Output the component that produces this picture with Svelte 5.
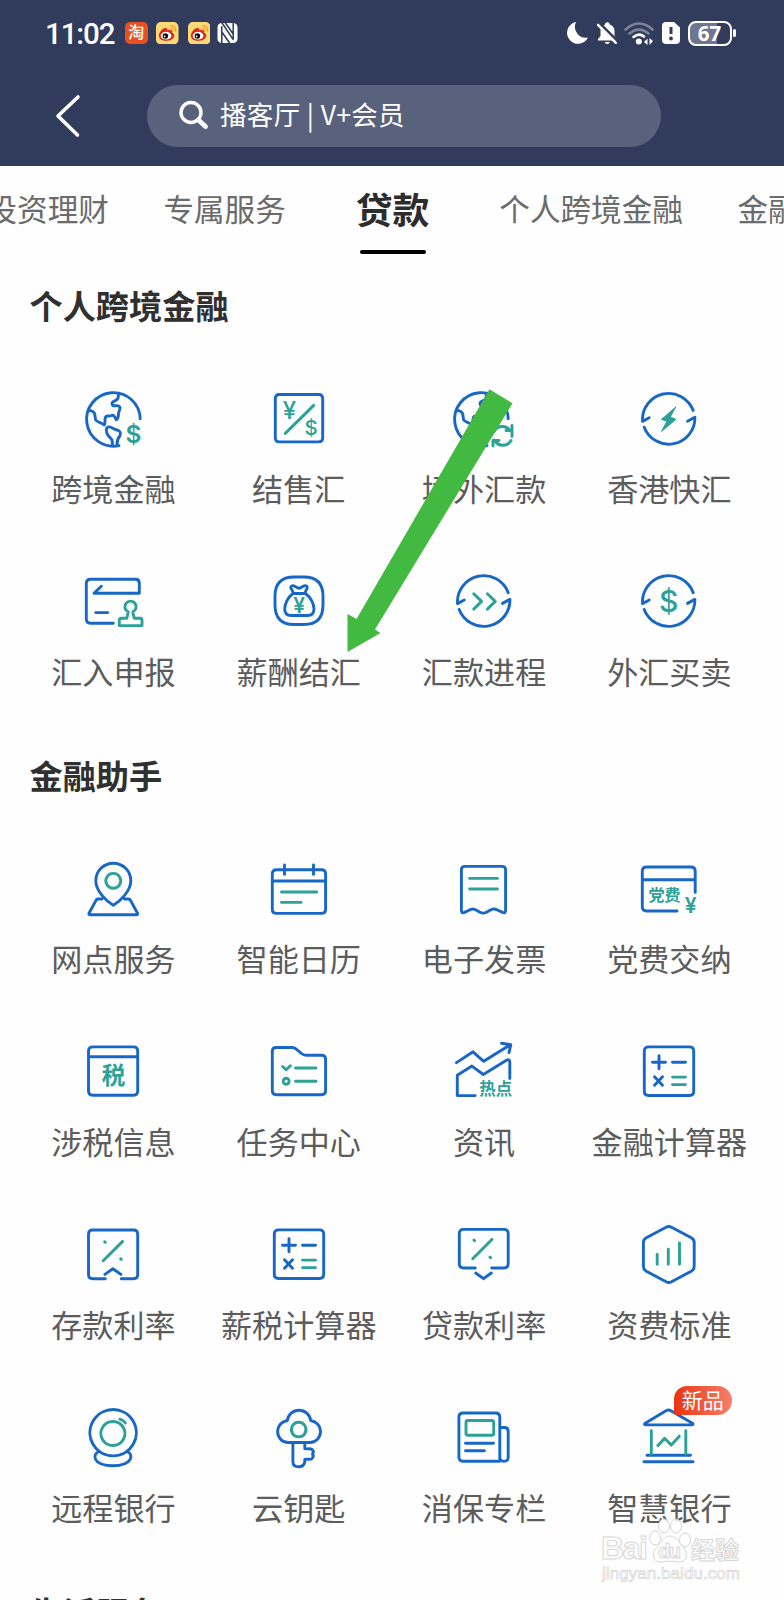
<script lang="ts">
  type Glyph = { t: string; x: number; y: number; size: number; weight?: number };
  type Icon = { blue?: string; green?: string; fill?: string; glyphs?: Glyph[]; dy?: number };
  type Item = { icon: string; label: string; badge?: string };

  const cycle =
    'M54.2 21.5A26.2 26.2 0 0 0 3.5 32.4L10.2 28.8M5.2 38.2A26.2 26.2 0 0 0 55.9 28.2L48.5 32.2';
  const land =
    'M57.2 29.8A26.8 26.8 0 1 0 36 56.6M35 4.2C36 8 35 11 31.5 12C27.5 13.5 29 17 32 16.8C37 16 38 18.5 36 22.5C34.5 25 37 28 33.3 30.8C32 28 31 25.5 28.5 26.5C25.5 28.2 23.5 25.5 22.3 28.5C21.5 31 22.7 34 21.3 36C19 33.5 14.5 33.5 12.7 31C11.5 28 13.5 22 6.5 21.5';
  // same globe, moved left to leave room for the refresh arrows
  const landLeft =
    'M54.2 29.8A26.8 26.8 0 1 0 33 56.6M32 4.2C33 8 32 11 28.5 12C24.5 13.5 26 17 29 16.8C34 16 35 18.5 33 22.5C31.5 25 34 28 30.3 30.8C29 28 28 25.5 25.5 26.5C22.5 28.2 20.5 25.5 19.3 28.5C18.5 31 19.7 34 18.3 36C16 33.5 11.5 33.5 9.7 31C8.5 28 10.5 22 3.5 21.5';
  const calc =
    'M9.5 4.9H50.5Q54.7 4.9 54.7 9.1V49.3Q54.7 53.5 50.5 53.5H9.5Q5.3 53.5 5.3 49.3V9.1Q5.3 4.9 9.5 4.9ZM13.5 20.2H26.5M20 13.7V26.7M33.5 20.2H46.5M15.5 34.8L23.5 43.2M23.5 34.8L15.5 43.2';

  const icons: Record<string, Icon> = {
    globe: {
      blue: land + 'M29.3 56.5C30 50.5 28.5 50 25.5 47C23 44 22.5 39 25 38C28 37 30 40 32.5 40.5C37 41.5 38.5 43.5 37 46.5C35 49 34 51 34 55.5',
      glyphs: [{ t: '$', x: 50.5, y: 54.2, size: 24.5, weight: 600 }],
    },
    exchange: {
      blue: 'M10.5 6.3H49.5Q53.7 6.3 53.7 10.5V49.5Q53.7 53.7 49.5 53.7H10.5Q6.3 53.7 6.3 49.5V10.5Q6.3 6.3 10.5 6.3Z',
      green: 'M44.7 17.2L16.3 45.2',
      glyphs: [
        { t: '¥', x: 20.4, y: 31.2, size: 24, weight: 500 },
        { t: '$', x: 42, y: 47, size: 20.5, weight: 500 },
      ],
      dy: -0.8,
    },
    remit: {
      blue: landLeft,
      green: 'M58 47.5V36.5M58 41.5H52M55.5 41A9.3 9.3 0 0 0 40 42.5M57 51.5A9.3 9.3 0 0 1 40.5 51M39 57V51.5H45',
    },
    bolt: { blue: cycle, fill: 'M36.5 18.2L22.5 30.4L27.9 32.3L22.5 42.4L36.9 30.3L31.5 28.2Z' },
    declare: {
      blue: 'M30.3 51.8H7.5Q3.3 51.8 3.3 47.6V12Q3.3 7.8 7.5 7.8H52.5Q56.3 7.8 56.3 11.8V21.8H11L18.3 14.8M12.7 41.2H24.7',
      green: 'M36.3 54.2V49Q36.3 46.8 38.5 46.8H43.8L45.2 40.4A5.6 5.6 0 1 1 49.8 40.4L51.2 46.8H56.8Q59 46.8 59 49V54.2Z',
      dy: -0.6,
    },
    bag: {
      blue: 'M25 6H35Q54 6 54 25V34Q54 53.5 35 53.5H25Q6 53.5 6 34V25Q6 6 25 6ZM24 22.5C19 26 15.7 33 15.7 38Q15.7 44.5 22 44.5H38.5Q45 44.5 45 38C45 33 41.5 26 36.4 22.5ZM24 22.5C25 19 20.5 18 22 15.5C24 12.5 27 17 30 17.3C33 17 36 12.5 38 15.5C39.5 18 35.5 19 36.4 22.5',
      glyphs: [{ t: '¥', x: 30.2, y: 41.6, size: 21, weight: 600 }],
      dy: -1,
    },
    progress: { blue: cycle, green: 'M19.7 22.5L27.6 30.2L19.7 37.9M33.4 22.5L41.3 30.2L33.4 37.9', dy: -0.8 },
    dollar: { blue: cycle, glyphs: [{ t: '$', x: 29.7, y: 40.6, size: 30, weight: 500 }], dy: -0.8 },
    pin: {
      blue: 'M30.3 45C24 41.5 12.8 31 12.8 20.5A17.5 17.5 0 0 1 47.8 20.5C47.8 31 36.5 41.5 30.3 45ZM19 38.8H14.8Q13.5 38.8 13 40.2L6 53Q5.6 54.6 7 54.6H53.5Q55 54.6 54.5 53L47.5 40.2Q47 38.8 45.5 38.8H41.5',
      green: 'M30.3 13.2A7.4 7.4 0 1 1 30.29 13.2Z',
      dy: 1.2,
    },
    calendar: {
      blue: 'M7.5 9.5H52.5Q56.6 9.5 56.6 13.7V49Q56.6 53.2 52.5 53.2H7.5Q3.3 53.2 3.3 49V13.7Q3.3 9.5 7.5 9.5ZM3.3 20.8H56.6M15.5 4.8V14.2M44.5 4.8V14.2',
      green: 'M12.5 31.8H47.7M12.5 42.2H32',
      dy: 1.2,
    },
    invoice: {
      blue: 'M11 6.2H48Q51.6 6.2 51.6 9.8V50Q51.6 53.5 48.5 52.2L44 50Q39.5 47.5 36 50L32.5 52Q29.3 53.8 26 52L22.5 50Q18.7 47.5 15 50L10.5 52.2Q7.4 53.5 7.4 50V9.8Q7.4 6.2 11 6.2Z',
      green: 'M15.6 18.2H43.4M15.6 28.8H43.4',
      dy: 1.2,
    },
    dues: {
      blue: 'M38 50.8H7.5Q3.3 50.8 3.3 46.6V11Q3.3 6.8 7.5 6.8H52Q56.2 6.8 56.2 11V32.2M3.3 19.5H56.2',
      glyphs: [
        { t: '党费', x: 25.6, y: 41, size: 16, weight: 700 },
        { t: '¥', x: 51.6, y: 53, size: 21, weight: 600 },
      ],
      dy: 1.2,
    },
    tax: {
      blue: 'M9.7 4.9H50.5Q54.7 4.9 54.7 9.1V49.1Q54.7 53.3 50.5 53.3H9.7Q5.5 53.3 5.5 49.1V9.1Q5.5 4.9 9.7 4.9ZM5.5 14.7H54.7',
      glyphs: [{ t: '税', x: 30.5, y: 41.8, size: 23.5, weight: 700 }],
    },
    tasks: {
      blue: 'M7.3 5.5H23Q25.5 5.5 27.5 7.3L32.5 11.5Q34.5 13.2 37 13.2H52.5Q56.6 13.2 56.6 17.4V48.5Q56.6 52.7 52.5 52.7H7.5Q3.3 52.7 3.3 48.5V9.5Q3.3 5.5 7.3 5.5Z',
      green: 'M13.6 24.5L17.2 27.8L21.4 23.8M26.5 26H47M26.5 39.3H47M17.2 36.3A3 3 0 1 1 17.19 36.3Z',
    },
    news: {
      blue: 'M2.5 20L19 9.2L29.7 18.7L55.8 2.5M47.5 .6L56.8 2L55 10M21.2 53H3.3V32.7L17.9 23.5L29.3 31.9L52.5 17.7Q55.8 16 55.8 19.5V36',
      glyphs: [{ t: '热点', x: 41.8, y: 52.4, size: 16.5, weight: 700 }],
      dy: 0.6,
    },
    calc: { blue: calc, green: 'M33.5 35.1H46.5M33.5 42.6H46.5' },
    deposit: {
      blue: 'M22.3 53.7H9.7Q5.5 53.7 5.5 49.5V9.2Q5.5 5 9.7 5H50.5Q54.7 5 54.7 9.2V49.5Q54.7 53.7 50.5 53.7H38.3M21.9 49.4L29.9 43.8L37.9 49.4',
      green: 'M39.6 16.4L20.2 35.7M21.6 16.7L22.3 17.3M37.6 33.7L38.3 34.3',
    },
    loan: {
      blue: 'M21.3 43H9.5Q5.3 43 5.3 38.8V8.6Q5.3 4.4 9.5 4.4H50Q54.2 4.4 54.2 8.6V38.8Q54.2 43 50 43H37.7M21.7 48L29.5 53.7L37.3 48',
      green: 'M37.9 14.4L18.7 33.7M19.9 15.1L20.6 15.7M35.9 32.1L36.6 32.7',
    },
    hexagon: {
      blue: 'M32.5 2.2L52.3 12.8Q55.2 14.5 55.2 17.5V41.5Q55.2 44.5 52.3 46.2L32.5 56.8Q29.8 58.2 27.1 56.8L7.3 46.2Q4.4 44.5 4.4 41.5V17.5Q4.4 14.5 7.3 12.8L27.1 2.2Q29.8 .8 32.5 2.2Z',
      green: 'M18.2 29.5V39.3M29.3 24.3V39.3M40.5 18V39.3',
    },
    webcam: {
      blue: 'M30.1 1.5A23.2 23.2 0 1 1 30.09 1.5ZM16 43.5C9 46 9.5 57.8 29.9 57.8C50 57.8 51 46 44 43.5',
      green: 'M29.9 13.5A12 12 0 1 1 29.89 13.5ZM36.9 11.2Q40.5 12.3 42.4 15',
    },
    key: {
      blue: 'M18.3 12.5A11.8 11.8 0 0 1 41.7 12.5C47.5 13.5 51.5 18 51.5 23.5C51.5 29.5 47 34.5 41 34.5H19C13 34.5 8.6 29.5 8.6 23.5C8.6 18 12.5 13.5 18.3 12.5ZM23.9 34.5V54Q24 58.8 29.8 58.8Q34.5 58.8 35.8 54V51.5C39 50.5 40 52 42.5 51Q45.5 48.5 43.5 46Q45.5 43.5 43 41.3C40 40 39 41.5 35.8 40.5V34.5',
      green: 'M29.7 14.2A7.3 7.3 0 1 1 29.69 14.2Z',
    },
    paper: {
      blue: 'M9 5H41.6Q45.8 5 45.8 9.2V53.3H9Q4.9 53.3 4.9 49.1V9.2Q4.9 5 9 5ZM45.8 19.5H50.5Q54.2 19.5 54.2 23.5V49.3Q54.2 53.3 50 53.3Q45.8 53.3 45.8 49.3M11.5 35.2H39.5M11.5 42.8H30.4',
      green: 'M14 12.5H37.7Q39.7 12.5 39.7 14.5V25.2Q39.7 27.2 37.7 27.2H14Q12 27.2 12 25.2V14.5Q12 12.5 14 12.5Z',
    },
    bank: {
      blue: 'M27 2.8Q29.5 1.2 32 2.8L53.8 15.5Q54.5 16.9 53 16.9H6.5Q5 16.9 5.8 15.5ZM8 47.2H51.5M5 53.8H54',
      green: 'M12.3 22.8V46M46.8 22.8V46M19 37.5L25.6 30.3L32.2 37L40.2 28.4M19 37V37.7M40.2 28.2V28.7',
    },
  };

  const tabs = ['投资理财', '专属服务', '贷款', '个人跨境金融', '金融助手'];
  let active = '贷款';

  const sections: { title: string; items: Item[] }[] = [
    {
      title: '个人跨境金融',
      items: [
        { icon: 'globe', label: '跨境金融' },
        { icon: 'exchange', label: '结售汇' },
        { icon: 'remit', label: '境外汇款' },
        { icon: 'bolt', label: '香港快汇' },
        { icon: 'declare', label: '汇入申报' },
        { icon: 'bag', label: '薪酬结汇' },
        { icon: 'progress', label: '汇款进程' },
        { icon: 'dollar', label: '外汇买卖' },
      ],
    },
    {
      title: '金融助手',
      items: [
        { icon: 'pin', label: '网点服务' },
        { icon: 'calendar', label: '智能日历' },
        { icon: 'invoice', label: '电子发票' },
        { icon: 'dues', label: '党费交纳' },
        { icon: 'tax', label: '涉税信息' },
        { icon: 'tasks', label: '任务中心' },
        { icon: 'news', label: '资讯' },
        { icon: 'calc', label: '金融计算器' },
        { icon: 'deposit', label: '存款利率' },
        { icon: 'calc', label: '薪税计算器' },
        { icon: 'loan', label: '贷款利率' },
        { icon: 'hexagon', label: '资费标准' },
        { icon: 'webcam', label: '远程银行' },
        { icon: 'key', label: '云钥匙' },
        { icon: 'paper', label: '消保专栏' },
        { icon: 'bank', label: '智慧银行', badge: '新品' },
      ],
    },
    { title: '生活服务', items: [] },
  ];
</script>

<div class="screen">
  <header>
    <div class="status">
      <span class="time">11:02</span>
      <span class="app taobao">淘</span>
      {#each [1, 2] as n (n)}
        <svg class="app weibo" viewBox="0 0 23 23">
          <rect width="23" height="23" rx="5" fill="#fbd974" />
          <path d="M3 14C3 9 9 5 11 6.5C12 7 11.5 8.5 12 8.7C14 7.8 17 8 16.5 11C19 12 19.5 14 17.5 16.5C14 20.5 3 20 3 14Z" fill="#d9241f" />
          <ellipse cx="10.3" cy="14" rx="5.5" ry="4" fill="#fff" />
          <circle cx="9.6" cy="14.2" r="2.8" fill="#111" />
          <circle cx="8.8" cy="14.8" r=".9" fill="#fff" />
          <path d="M14 6.5Q17.5 6.5 17.3 10M14.5 3.7Q20.5 4 20 10" fill="none" stroke="#f0a132" stroke-width="1.5" />
        </svg>
      {/each}
      <svg class="nfc" viewBox="0 0 22 22">
        <rect x=".5" y=".5" width="21" height="21" rx="4.5" fill="#fff" />
        <path d="M5 4V22M5 0L17 18M5.500 10.500L13.500 22M8.500 0L17 12M17 0V18" fill="none" stroke="#313b5b" stroke-width="1.6" />
      </svg>
      <div class="indicators">
        <svg width="21" height="22" viewBox="0 0 21 22">
          <path d="M9 0A11 11 0 1 0 21 15.5A11 11 0 0 1 9 0Z" fill="#fff" />
        </svg>
        <svg class="bell" width="20" height="22" viewBox="0 0 20 22">
          <path d="M1 18.5V17L3.5 14V8Q4 4 8 2.5Q8.2 .2 10.3 .2Q12.5 .2 12.7 2.5Q17.5 4 17.5 9V14L19 17.5V18.5ZM7.5 20H13Q12 22 10.2 22Q8.5 22 7.5 20Z" fill="#fff" />
          <path d="M2.5 1L20.5 19" stroke="#313b5b" stroke-width="2.5" />
          <path d="M1 2.8L18.8 20.8" stroke="#fff" stroke-width="2.4" stroke-linecap="round" />
        </svg>
        <svg class="wifi" width="30" height="23" viewBox="0 0 30 23">
          <g fill="none" stroke-width="2.6" stroke-linecap="round">
            <path d="M1.5 7.5Q15 -4.5 28.5 7.5M5.5 11.5Q15 3.5 24.5 11.5" stroke="#7c849c" />
            <path d="M9.5 15Q15 10.5 20 14.5" stroke="#fff" />
          </g>
          <circle cx="14.8" cy="19.5" r="3" fill="#fff" />
          <path d="M20 20L23.5 16.5V23ZM25.5 16V23L29 19Z" fill="#fff" />
        </svg>
        <svg class="sim" width="18" height="22" viewBox="0 0 18 22">
          <path d="M4 0H12L18 5.5V18Q18 22 14 22H4Q0 22 0 18V4Q0 0 4 0Z" fill="#fff" />
          <path d="M9 5V12" stroke="#313b5b" stroke-width="3" />
          <circle cx="9" cy="16.5" r="1.9" fill="#313b5b" />
        </svg>
        <span class="battery">67</span>
        <span class="nub"></span>
      </div>
    </div>
    <div class="searchbar">
      <svg class="back" width="26" height="44" viewBox="0 0 26 44">
        <path d="M23 3L3 22L22.5 41" fill="none" stroke="#fff" stroke-width="3.6" stroke-linecap="round" stroke-linejoin="round" />
      </svg>
      <div class="search">
        <svg width="32" height="32" viewBox="0 0 32 32">
          <circle cx="13" cy="12.5" r="10" fill="none" stroke="#fff" stroke-width="3.4" />
          <path d="M20.5 20L27.5 26.5" stroke="#fff" stroke-width="4.8" stroke-linecap="round" />
        </svg>
        <span>播客厅 | V+会员</span>
      </div>
    </div>
  </header>

  <nav>
    {#each tabs as tab}
      <button class:active={tab === active} on:click={() => (active = tab)}>{tab}</button>
    {/each}
  </nav>

  <main>
    {#each sections as section}
      <section>
        <h2>{section.title}</h2>
        <div class="grid">
          {#each section.items as item}
            {@const icon = icons[item.icon]}
            <div class="item">
              <svg class="icon" viewBox="0 0 60 60">
                <g transform="translate(0 {icon.dy ?? 0})">
                  {#if icon.blue}<path class="blue" d={icon.blue} />{/if}
                  {#if icon.green}<path class="green" d={icon.green} />{/if}
                  {#if icon.fill}<path class="solid" d={icon.fill} />{/if}
                  {#each icon.glyphs ?? [] as g}
                    <text x={g.x} y={g.y} font-size={g.size} font-weight={g.weight}>{g.t}</text>
                  {/each}
                </g>
              </svg>
              {#if item.badge}<span class="badge">{item.badge}</span>{/if}
              <span class="label">{item.label}</span>
            </div>
          {/each}
        </div>
      </section>
    {/each}
  </main>

  <!-- pointer towards the payroll settlement entry -->
  <svg class="arrow" width="170" height="270" viewBox="0 0 170 270">
    <path d="M144.5 1.3L167.5 15.3L30 241.500L35.5 245L2.500 264V226L11.5 231Z" fill="#42ba41" />
  </svg>

  <div class="watermark">
    <svg width="146" height="78" viewBox="0 0 146 78">
      <g class="mark">
        <text x="3" y="45" font-size="32" textLength="47">Bai</text>
        <ellipse cx="57" cy="24" rx="5.5" ry="7" />
        <ellipse cx="66" cy="12" rx="5.5" ry="7" />
        <ellipse cx="78" cy="12" rx="5.5" ry="7" />
        <ellipse cx="87" cy="26" rx="5.5" ry="7" />
        <path d="M72 22C79 22 81 30 86 34C91 41 88 49 80 48C75 47 69 47 64 48C55 49 53 40 58 34C63 30 65 22 72 22Z" />
        <text x="60" y="44" font-size="20" textLength="23">du</text>
        <text x="93" y="45" font-size="24" textLength="48">经验</text>
        <text class="url" x="4" y="65" font-size="17" textLength="138">jingyan.baidu.com</text>
      </g>
    </svg>
  </div>
</div>

<style>
  :global(body) {
    margin: 0;
    background: #fefefe;
  }

  .screen {
    position: relative;
    width: 784px;
    height: 1600px;
    overflow: hidden;
    background: #fefefe;
    font-family: 'Noto Sans CJK SC', sans-serif;
  }

  svg {
    display: block;
    flex: none;
  }

  header {
    height: 166px;
    background: #313b5b;
    color: #fff;
  }

  .status {
    display: flex;
    align-items: center;
    height: 66px;
    padding: 0 48px 0 45px;
  }

  .time {
    width: 80px;
    margin-top: 2px;
    font-family: Roboto, sans-serif;
    font-size: 29.5px;
    font-weight: 500;
    letter-spacing: -1.1px;
    white-space: nowrap;
  }

  .app {
    width: 22.5px;
    height: 22.5px;
    margin-right: 8.8px;
  }

  .taobao {
    border-radius: 5px;
    background: #e9501f;
    font-size: 16px;
    font-weight: 500;
    line-height: 19px;
    text-align: center;
  }

  .nfc {
    width: 21px;
    height: 22px;
    margin-left: -2px;
  }

  .indicators {
    display: flex;
    align-items: center;
    margin-left: auto;
  }

  .bell {
    margin-left: 9px;
  }

  .wifi {
    margin-left: 7px;
  }

  .sim {
    margin-left: 8px;
  }

  .battery {
    box-sizing: border-box;
    width: 44px;
    height: 25px;
    margin-left: 8px;
    border: 2px solid #fff;
    border-radius: 8px;
    background: linear-gradient(to right, #6f7790 68%, #313b5b 68%);
    font-family: 'Open Sans', sans-serif;
    font-size: 20.5px;
    font-weight: 700;
    line-height: 21px;
    text-align: center;
  }

  .nub {
    width: 3px;
    height: 8px;
    margin-left: 1.5px;
    border-radius: 2px;
    background: #fff;
  }

  .searchbar {
    display: flex;
    align-items: center;
    padding: 19px 0 0 55px;
  }

  .search {
    display: flex;
    align-items: center;
    box-sizing: border-box;
    width: 514px;
    height: 62px;
    margin-left: 66px;
    padding-left: 31px;
    border-radius: 31px;
    background: #59627c;
  }

  .search span {
    margin: -6px 0 0 10px;
    font-size: 26.5px;
    letter-spacing: 0.35px;
    white-space: nowrap;
  }

  nav {
    display: flex;
    align-items: flex-start;
    gap: 54.5px;
    box-sizing: border-box;
    height: 114.5px;
    margin-left: -13.5px;
    padding-top: 16.5px;
  }

  button {
    flex: none;
    display: flex;
    flex-direction: column;
    align-items: center;
    height: 71px;
    padding: 0;
    border: none;
    background: none;
    color: #6b6b6b;
    font-family: inherit;
    font-size: 30.6px;
    line-height: 50px;
  }

  button.active {
    padding: 0 15.5px;
    color: #2c2c2c;
    font-size: 36.8px;
    font-weight: 700;
  }

  button.active::after {
    content: '';
    width: 66px;
    height: 5px;
    margin-top: 17.5px;
    border-radius: 2.5px;
    background: #000;
  }

  section {
    padding-bottom: 60px;
  }

  h2 {
    height: 48px;
    margin: 0 0 60px 29.5px;
    color: #303030;
    font-size: 33.2px;
    font-weight: 700;
    line-height: 48px;
  }

  .grid {
    display: grid;
    grid-template-columns: repeat(4, 185.3px);
    row-gap: 64px;
    margin: 0 0 0.5px 20.8px;
  }

  .item {
    position: relative;
    display: flex;
    flex-direction: column;
    align-items: center;
    gap: 19px;
  }

  .icon {
    width: 60px;
    height: 60px;
    overflow: visible;
  }

  .icon path {
    fill: none;
    stroke-width: 2.9;
    stroke-linecap: round;
    stroke-linejoin: round;
  }

  .icon .blue {
    stroke: #1867c6;
  }

  .icon .green {
    stroke: #2ba198;
  }

  .icon .solid {
    fill: #2ba198;
    stroke: #2ba198;
    stroke-width: 1;
  }

  .icon text {
    fill: #2ba198;
    font-family: Inter, 'Noto Sans CJK SC', sans-serif;
    text-anchor: middle;
  }

  .label {
    color: #5c5c5c;
    font-size: 31.1px;
    line-height: 40px;
    white-space: nowrap;
  }

  .badge {
    position: absolute;
    top: -22px;
    left: 97px;
    width: 58px;
    height: 29px;
    border-radius: 13px 14.5px 14.5px 3px;
    background: linear-gradient(to right, #ea3310, #f4806b);
    color: #fff;
    font-size: 21px;
    line-height: 27px;
    text-align: center;
  }

  .arrow {
    position: absolute;
    top: 388px;
    left: 344.5px;
  }

  .watermark {
    position: absolute;
    top: 1514px;
    left: 598px;
  }

  .mark {
    fill: #fff;
    stroke: #d2d2d2;
    stroke-width: 1;
    font-family: 'Liberation Sans', 'Noto Sans CJK SC', sans-serif;
    font-weight: 700;
    opacity: 0.9;
  }

  .url {
    stroke-width: 0.7;
    font-weight: 400;
  }
</style>
